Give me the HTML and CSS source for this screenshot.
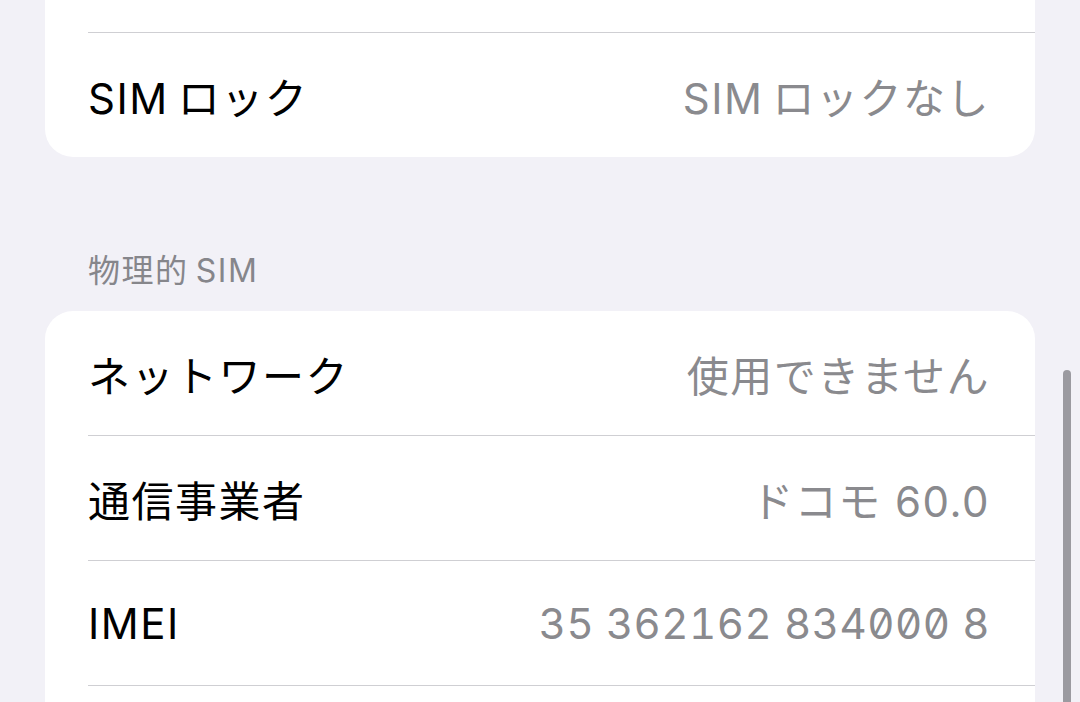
FILE: index.html
```html
<!DOCTYPE html>
<html lang="ja">
<head>
    <meta charset="UTF-8">
    <meta name="viewport" content="width=device-width, initial-scale=1.0">
    <title>SIM情報</title>
    <link rel="stylesheet" href="styles.css">
</head>
<body>
    <div class="page">
        <div class="group">
            <div class="row row-cut"></div>
            <div class="row">
                <span class="label">SIM&#8201;ロック</span>
                <span class="value">SIM&#8201;ロックなし</span>
            </div>
        </div>

        <div class="section-title">物理的&#8201;SIM</div>
        <div class="group">
            <div class="row">
                <span class="label">ネットワーク</span>
                <span class="value">使用できません</span>
            </div>
            <div class="row">
                <span class="label">通信事業者</span>
                <span class="value">ドコモ 60.0</span>
            </div>
            <div class="row">
                <span class="label">IMEI</span>
                <span class="value digits">35 362162 834000 8</span>
            </div>
            <div class="row"></div>
        </div>
    </div>
    <div class="scrollbar"></div>
</body>
</html>
```

FILE: styles.css
```css
body {
    margin: 0;
    height: 702px;
    overflow: hidden;
    background-color: #f2f1f7;
    font-family: Inter, "Noto Sans CJK JP", sans-serif;
}

.page {
    padding: 0 45px;
}

.group {
    background-color: #fff;
    border-radius: 28px;
    padding-left: 43px;
}

.group:first-child {
    border-radius: 0 0 28px 28px;
}

.row {
    display: flex;
    justify-content: space-between;
    align-items: center;
    height: 124px;
    padding-right: 45px;
    border-bottom: 1px solid #cfcfd3;
}

.row:last-child {
    border-bottom: none;
}

.row-cut {
    height: 32px;
}

.label {
    font-size: 42px;
    color: #000;
    letter-spacing: 1.5px;
}

.value {
    font-size: 42px;
    color: #8a8a8e;
    letter-spacing: 1.5px;
}

.digits {
    font-feature-settings: "zero", "tnum";
    letter-spacing: 0.5px;
}

.section-title {
    font-size: 32px;
    color: #86868b;
    padding: 94px 0 20px 43px;
    line-height: 40px;
    letter-spacing: 1.5px;
}

.scrollbar {
    position: absolute;
    left: 1063px;
    top: 370px;
    width: 8px;
    height: 340px;
    border-radius: 4px;
    background-color: #9b9aa0;
}
```
